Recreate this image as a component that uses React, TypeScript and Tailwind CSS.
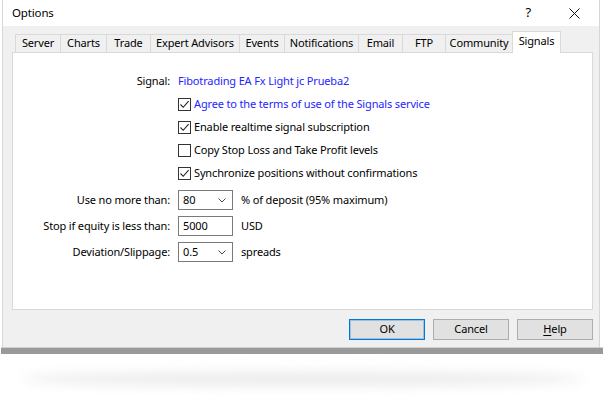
import React from 'react';

const tabs = [
  { name: 'Server', w: 'w-[45px]' },
  { name: 'Charts', w: 'w-[46px]' },
  { name: 'Trade', w: 'w-[44px]' },
  { name: 'Expert Advisors', w: 'w-[89px]' },
  { name: 'Events', w: 'w-[45px]' },
  { name: 'Notifications', w: 'w-[74px]' },
  { name: 'Email', w: 'w-[44px]' },
  { name: 'FTP', w: 'w-[43px]' },
  { name: 'Community', w: 'w-[67px]' },
];

function Check({ checked }: { checked: boolean }) {
  return (
    <span className="w-[13px] h-[13px] border border-[#333] bg-white flex items-center justify-center shrink-0">
      {checked && (
        <svg width="11" height="11" viewBox="0 0 11 11">
          <path d="M1.5 5.5 L4.2 8.3 L9.6 2.2" fill="none" stroke="#222" strokeWidth="1.1" />
        </svg>
      )}
    </span>
  );
}

function Chevron() {
  return (
    <svg width="8" height="5" viewBox="0 0 8 5" className="shrink-0">
      <path d="M0.5 0.5 L4 4 L7.5 0.5" fill="none" stroke="#444" strokeWidth="1" />
    </svg>
  );
}

function CheckRow({ checked, label, blue }: { checked: boolean; label: string; blue?: boolean }) {
  return (
    <div className="h-[23px] flex items-center">
      <div className="w-[157px]" />
      <div className="ml-[8px] flex items-center gap-[3px]">
        <Check checked={checked} />
        <span className={blue ? 'text-[#2525ff]' : 'text-black'}>{label}</span>
      </div>
    </div>
  );
}

function FieldRow({ label, value, suffix, combo }: { label: string; value: string; suffix: string; combo?: boolean }) {
  return (
    <div className="h-[26px] flex items-center">
      <div className="w-[157px] text-right">{label}</div>
      <div className="ml-[8px] w-[55px] h-[20px] border border-[#7a7a7a] bg-white flex items-center justify-between pl-[4px] pr-[6px]">
        <span>{value}</span>
        {combo && <Chevron />}
      </div>
      <span className="ml-[8px]">{suffix}</span>
    </div>
  );
}

export default function App() {
  return (
    <div className="w-[605px] h-[395px] bg-white overflow-hidden text-[11px] tracking-[-0.15px] text-black" style={{ fontFamily: '"Segoe UI", "Noto Sans", sans-serif' }}>
      <div className="ml-[2px] w-[598px] border-x border-[#d6d6d6]">
        {/* Title bar */}
        <div className="h-[26px] bg-white flex items-center pl-[9px]">
          <span className="text-[11.5px]">Options</span>
          <span className="ml-auto text-[13px] mr-[38px]">?</span>
          <svg width="11" height="11" viewBox="0 0 11 11" className="mr-[19px]">
            <path d="M0.5 0.5 L10.5 10.5 M10.5 0.5 L0.5 10.5" stroke="#111" strokeWidth="1" />
          </svg>
        </div>

        {/* Body */}
        <div className="h-[321px] bg-[#f0f0f0] px-[9px] pt-[5px]">
          <div className="flex items-end h-[21px] pl-[3px]">
            {tabs.map((t) => (
              <div key={t.name} className={`${t.w} h-[18px] border-t border-l border-[#d9d9d9] flex items-center justify-center text-black`}>
                {t.name}
              </div>
            ))}
            <div className="w-[49px] h-[22px] -mb-px relative z-10 bg-white border border-b-0 border-[#d9d9d9] flex items-center justify-center pb-[2px]">
              Signals
            </div>
          </div>

          <div className="h-[258px] w-[581px] bg-white border border-[#d9d9d9] pt-[17px]">
            <div className="h-[23px] flex items-center">
              <div className="w-[157px] text-right">Signal:</div>
              <span className="ml-[8px] text-[#2525ff]">Fibotrading EA Fx Light jc Prueba2</span>
            </div>
            <CheckRow checked label="Agree to the terms of use of the Signals service" blue />
            <CheckRow checked label="Enable realtime signal subscription" />
            <CheckRow checked={false} label="Copy Stop Loss and Take Profit levels" />
            <CheckRow checked label="Synchronize positions without confirmations" />
            <div className="mt-[2px]">
              <FieldRow label="Use no more than:" value="80" suffix="% of deposit (95% maximum)" combo />
              <FieldRow label="Stop if equity is less than:" value="5000" suffix="USD" />
              <FieldRow label="Deviation/Slippage:" value="0.5" suffix="spreads" combo />
            </div>
          </div>

          <div className="flex justify-end gap-[8px] mt-[9px] -mr-[3px]">
            <button className="w-[76px] h-[21px] bg-[#e1e1e1] border border-[#0078d7] outline outline-1 -outline-offset-2 outline-[#0078d7]/30">OK</button>
            <button className="w-[76px] h-[21px] bg-[#e1e1e1] border border-[#adadad]">Cancel</button>
            <button className="w-[76px] h-[21px] bg-[#e1e1e1] border border-[#adadad]">
              <span className="underline underline-offset-2">H</span>elp
            </button>
          </div>
        </div>
      </div>
      <div className="ml-[1px] w-[602px] h-[7px] bg-[#999] border-t border-[#cfcfcf]" />
      <div className="mt-[18px] mx-[20px] h-[14px] rounded-[50%] bg-[#ebebeb] blur-[6px]" />
    </div>
  );
}
